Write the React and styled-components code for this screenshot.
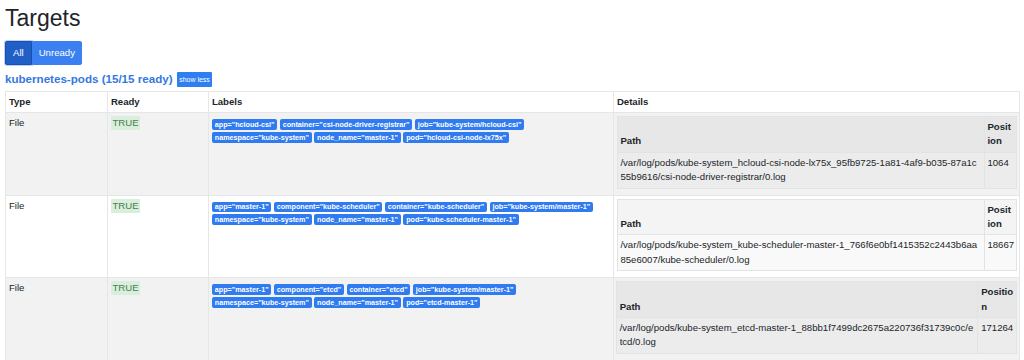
import React from "react";
import styled, { createGlobalStyle } from "styled-components";

const GlobalStyle = createGlobalStyle`
  body {
    margin: 0;
    background: #fff;
    color: #212529;
    font-family: "Liberation Sans", Arial, Helvetica, sans-serif;
    font-size: 9.6px;
    line-height: 14.4px;
  }
  * { box-sizing: border-box; }
`;

const targets = [
  {
    labels: [
      'app="hcloud-csi"',
      'container="csi-node-driver-registrar"',
      'job="kube-system/hcloud-csi"',
      'namespace="kube-system"',
      'node_name="master-1"',
      'pod="hcloud-csi-node-lx75x"',
    ],
    path: "/var/log/pods/kube-system_hcloud-csi-node-lx75x_95fb9725-1a81-4af9-b035-87a1c55b9616/csi-node-driver-registrar/0.log",
    position: "1064",
    posWidth: 32,
    inset: 2.5,
  },
  {
    labels: [
      'app="master-1"',
      'component="kube-scheduler"',
      'container="kube-scheduler"',
      'job="kube-system/master-1"',
      'namespace="kube-system"',
      'node_name="master-1"',
      'pod="kube-scheduler-master-1"',
    ],
    path: "/var/log/pods/kube-system_kube-scheduler-master-1_766f6e0bf1415352c2443b6aa85e6007/kube-scheduler/0.log",
    position: "18667",
    posWidth: 32,
    inset: 2.5,
  },
  {
    labels: [
      'app="master-1"',
      'component="etcd"',
      'container="etcd"',
      'job="kube-system/master-1"',
      'namespace="kube-system"',
      'node_name="master-1"',
      'pod="etcd-master-1"',
    ],
    path: "/var/log/pods/kube-system_etcd-master-1_88bb1f7499dc2675a220736f31739c0c/etcd/0.log",
    position: "171264",
    posWidth: 39,
    inset: 1.75,
  },
];

const Page = styled.div`
  padding: 5px 5px 0;
`;

const Title = styled.h1`
  margin: 0;
  font-size: 23px;
  line-height: 26px;
  font-weight: 400;
  color: #212529;
`;

const ButtonGroup = styled.div`
  display: inline-flex;
  margin-top: 10px;
`;

const FilterButton = styled.button`
  font-family: inherit;
  font-size: 9.6px;
  line-height: 14.4px;
  padding: 3.6px ${(p) => (p.$active ? "7px" : "6px")};
  color: #fff;
  background: ${(p) => (p.$active ? "#2060c6" : "#3a80f0")};
  border: 1px solid ${(p) => (p.$active ? "#1a4fae" : "#3a80f0")};
  border-radius: ${(p) => (p.$first ? "2px 0 0 2px" : "0 2px 2px 0")};
  box-shadow: ${(p) => (p.$active ? "0 0 0 1px rgba(60,120,220,.35)" : "none")};
  cursor: pointer;
`;

const PoolHeader = styled.div`
  display: flex;
  align-items: center;
  gap: 4px;
  height: 16px;
  margin-top: 7px;
`;

const PoolName = styled.a`
  font-size: 11.6px;
  font-weight: 700;
  color: #3478e0;
  text-decoration: none;
`;

const SmallButton = styled.button`
  font-family: inherit;
  font-size: 7px;
  line-height: 10px;
  padding: 2.8px 2.6px;
  color: #fff;
  background: #2f7ff2;
  border: none;
  border-radius: 1px;
`;

const Table = styled.table`
  width: 1014px;
  margin-top: 3px;
  border-collapse: collapse;
  table-layout: fixed;
  color: #212529;
  font-size: 9.6px;
`;

const Th = styled.th`
  text-align: left;
  font-weight: 700;
  padding: 3px 2.9px;
  border: 1px solid #e4e6e8;
  vertical-align: bottom;
  color: #212529;
`;

const Row = styled.tr`
  background: ${(p) => (p.$odd ? "#f2f2f2" : "#fff")};
`;

const Td = styled.td`
  padding: 3px 2.9px;
  border: 1px solid #e4e6e8;
  vertical-align: top;
  color: #212529;
`;

const DetailsTd = styled(Td)`
  padding: 3px ${(p) => p.$inset}px 6px;
`;

const Health = styled.span`
  display: inline-block;
  padding: 0 1.6px;
  line-height: 14px;
  background: #d8efdb;
  color: #4f7b52;
  border-radius: 1px;
`;

const Labels = styled.div`
  display: flex;
  flex-wrap: wrap;
  gap: 2px 2.4px;
  padding-top: 3px;
`;

const Badge = styled.span`
  display: inline-block;
  font-size: 7.2px;
  font-weight: 700;
  line-height: 7.2px;
  padding: 1.8px 2.9px;
  color: #fff;
  background: #2f7bef;
  border-radius: 2px;
  white-space: nowrap;
`;

const Inner = styled.table`
  width: 100%;
  border-collapse: collapse;
  table-layout: fixed;
`;

const InnerHead = styled.tr`
  background: rgba(0, 0, 0, 0.045);
`;

const InnerRow = styled.tr`
  background: rgba(0, 0, 0, 0.025);
`;

const InnerTh = styled.th`
  text-align: left;
  font-weight: 700;
  padding: 3px 2.9px;
  border: 1px solid #e2e3e5;
  vertical-align: bottom;
  word-break: break-all;
  color: #212529;
  width: ${(p) => (p.$w ? `${p.$w}px` : "auto")};
`;

const InnerTd = styled.td`
  padding: 3px 2.9px;
  border: 1px solid #e2e3e5;
  vertical-align: top;
  color: #212529;
  word-break: ${(p) => (p.$number ? "normal" : "break-all")};
  white-space: ${(p) => (p.$number ? "nowrap" : "normal")};
`;

export default function App() {
  return (
    <>
      <GlobalStyle />
      <Page>
        <Title>Targets</Title>
        <ButtonGroup>
          <FilterButton $active $first>
            All
          </FilterButton>
          <FilterButton>Unready</FilterButton>
        </ButtonGroup>
        <PoolHeader>
          <PoolName href="#">kubernetes-pods (15/15 ready)</PoolName>
          <SmallButton>show less</SmallButton>
        </PoolHeader>
        <Table>
          <colgroup>
            <col style={{ width: 102 }} />
            <col style={{ width: 101 }} />
            <col style={{ width: 405 }} />
            <col style={{ width: 406 }} />
          </colgroup>
          <thead>
            <tr>
              <Th>Type</Th>
              <Th>Ready</Th>
              <Th>Labels</Th>
              <Th>Details</Th>
            </tr>
          </thead>
          <tbody>
            {targets.map((t, i) => (
              <Row key={i} $odd={i % 2 === 0}>
                <Td>File</Td>
                <Td>
                  <Health>TRUE</Health>
                </Td>
                <Td>
                  <Labels>
                    {t.labels.map((l) => (
                      <Badge key={l}>{l}</Badge>
                    ))}
                  </Labels>
                </Td>
                <DetailsTd $inset={t.inset}>
                  <Inner>
                    <thead>
                      <InnerHead>
                        <InnerTh>Path</InnerTh>
                        <InnerTh $w={t.posWidth}>Position</InnerTh>
                      </InnerHead>
                    </thead>
                    <tbody>
                      <InnerRow>
                        <InnerTd>{t.path}</InnerTd>
                        <InnerTd $number>{t.position}</InnerTd>
                      </InnerRow>
                    </tbody>
                  </Inner>
                </DetailsTd>
              </Row>
            ))}
          </tbody>
        </Table>
      </Page>
    </>
  );
}
